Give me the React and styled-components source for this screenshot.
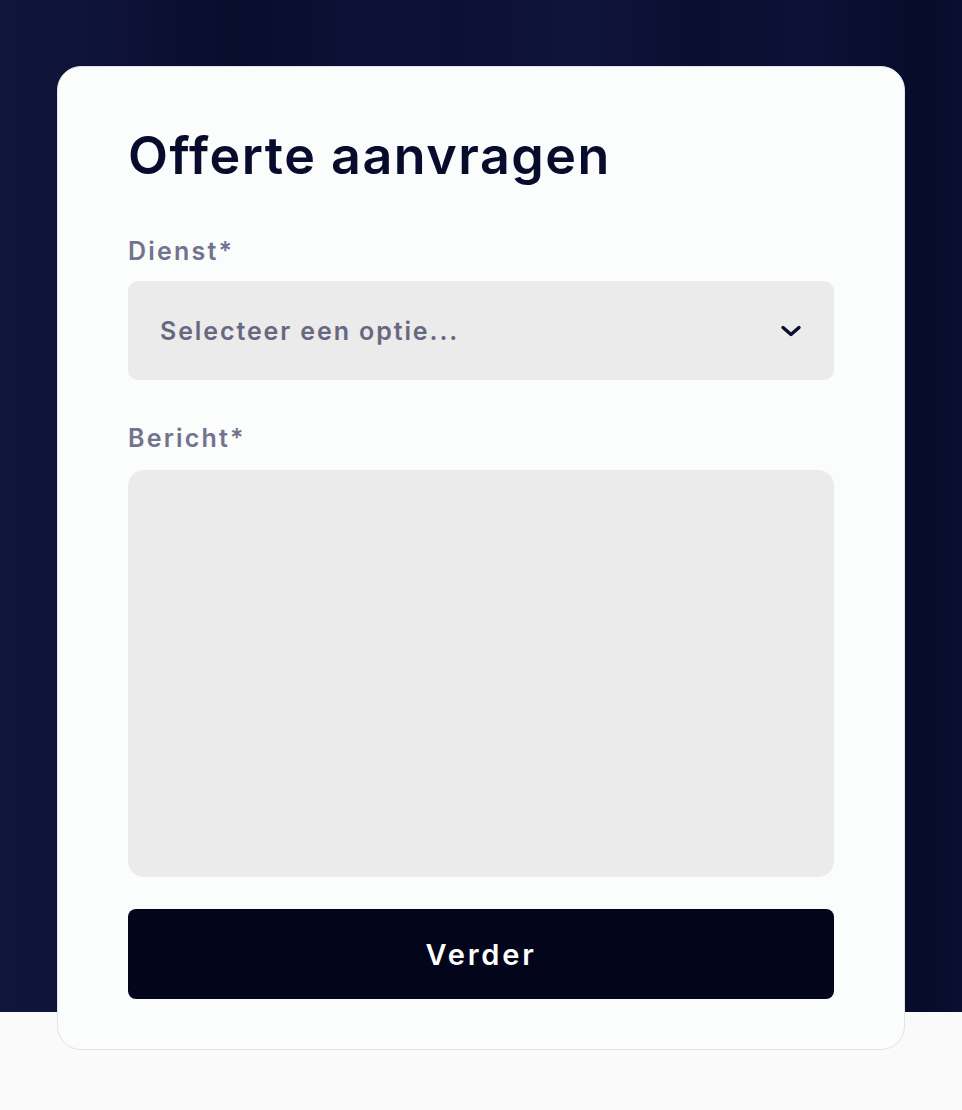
import React from "react";
import styled, { createGlobalStyle } from "styled-components";

const GlobalStyle = createGlobalStyle`
  html, body {
    margin: 0;
    padding: 0;
    background: #fafafa;
  }
  * { box-sizing: border-box; }
  body {
    font-family: Inter, "Noto Sans", "Liberation Sans", sans-serif;
  }
`;

const Page = styled.main`
  min-height: 1110px;
  padding-top: 66px;
  background:
    linear-gradient(180deg, transparent 0, transparent 1012px, #fafafa 1012px),
    linear-gradient(
      90deg,
      #10153c 0%,
      #0e1338 10%,
      #0a0f31 20%,
      #080d2e 25%,
      #0c1135 36%,
      #0b1034 48%,
      #0f1439 60%,
      #0a0f32 72%,
      #0c1135 85%,
      #070b2b 96%,
      #0a0e30 100%
    );
`;

const Card = styled.section`
  width: 848px;
  margin: 0 auto;
  background: #fbfcfc;
  border: 1px solid #e3e4e6;
  border-radius: 24px;
  padding: 59px 70px 50px;
  display: flex;
  flex-direction: column;
`;

const Title = styled.h1`
  margin: 0;
  font-size: 52px;
  line-height: 60px;
  font-weight: 600;
  color: #070b2c;
  letter-spacing: 1.5px;
`;

const Label = styled.label`
  display: block;
  margin-top: ${(p) => p.$top}px;
  margin-bottom: ${(p) => p.$bottom}px;
  font-size: 25px;
  line-height: 30px;
  font-weight: 600;
  color: #737390;
  letter-spacing: 2.2px;
`;

const Select = styled.div`
  height: 99px;
  border-radius: 10px;
  background: #ebebeb;
  padding: 0 32px;
  display: flex;
  align-items: center;
  justify-content: space-between;
  cursor: pointer;
`;

const Placeholder = styled.span`
  font-size: 25px;
  font-weight: 600;
  color: #676880;
  letter-spacing: 1.9px;
`;

const Chevron = styled.svg`
  width: 22px;
  height: 14px;
  display: block;
`;

const TextArea = styled.textarea`
  display: block;
  width: 100%;
  height: 407px;
  border: none;
  border-radius: 16px;
  background: #ebebeb;
  resize: none;
  outline: none;
  padding: 24px 32px;
  font-family: inherit;
  font-size: 24px;
`;

const Button = styled.button`
  margin-top: 32px;
  height: 90px;
  width: 100%;
  border: none;
  border-radius: 8px;
  background: #03051a;
  color: #ffffff;
  font-family: inherit;
  font-size: 29px;
  font-weight: 600;
  letter-spacing: 2.8px;
  cursor: pointer;
`;

export default function App() {
  return (
    <>
      <GlobalStyle />
      <Page>
        <Card>
          <Title>Offerte aanvragen</Title>
          <Label $top={50} $bottom={15}>Dienst*</Label>
          <Select role="combobox">
            <Placeholder>Selecteer een optie...</Placeholder>
            <Chevron viewBox="0 0 22 14" fill="none">
              <path
                d="M3 3.5 L11 10.5 L19 3.5"
                stroke="#0a0d2e"
                strokeWidth="3.4"
                strokeLinecap="round"
                strokeLinejoin="round"
              />
            </Chevron>
          </Select>
          <Label $top={43} $bottom={17}>Bericht*</Label>
          <TextArea />
          <Button>Verder</Button>
        </Card>
      </Page>
    </>
  );
}
